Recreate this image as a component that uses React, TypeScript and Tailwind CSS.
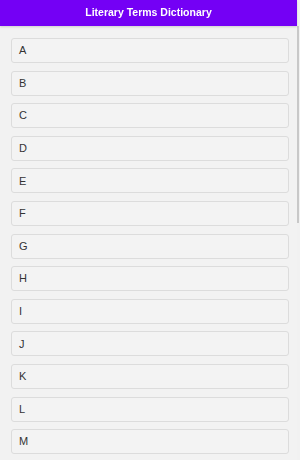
const letters = "ABCDEFGHIJKLMNOPQRSTUVWXYZ".split("");

export default function App() {
  return (
    <div
      className="relative h-[460px] w-[300px] overflow-hidden bg-[#f2f2f2]"
      style={{ fontFamily: '"Liberation Sans", Arial, sans-serif' }}
    >
      <div className="h-full overflow-y-auto [scrollbar-width:none]">
        <header className="sticky top-0 z-10 mr-[3px] flex h-[26px] items-center justify-center bg-[#7400f5] shadow-[0_1px_2px_rgba(0,0,0,0.15)]">
          <h1 className="text-[10.5px] font-bold text-white">Literary Terms Dictionary</h1>
        </header>

        <ul className="flex flex-col gap-[7.6px] pb-[130px] pl-[11px] pr-[11px] pt-[12px]">
          {letters.map((l) => (
            <li
              key={l}
              className="flex h-[25px] items-center rounded-[3px] border border-[#dcdcdc] bg-[#f3f3f3] px-[7px] text-[11px] text-[#333]"
            >
              {l}
            </li>
          ))}
        </ul>
      </div>

      {/* thin scrollbar */}
      <div className="pointer-events-none absolute right-0 top-0 h-full w-[3px] bg-[#f1f1f1]">
        <div className="mt-[26px] h-[197px] w-[2px] bg-[#c8c8c8]" />
      </div>
    </div>
  );
}
